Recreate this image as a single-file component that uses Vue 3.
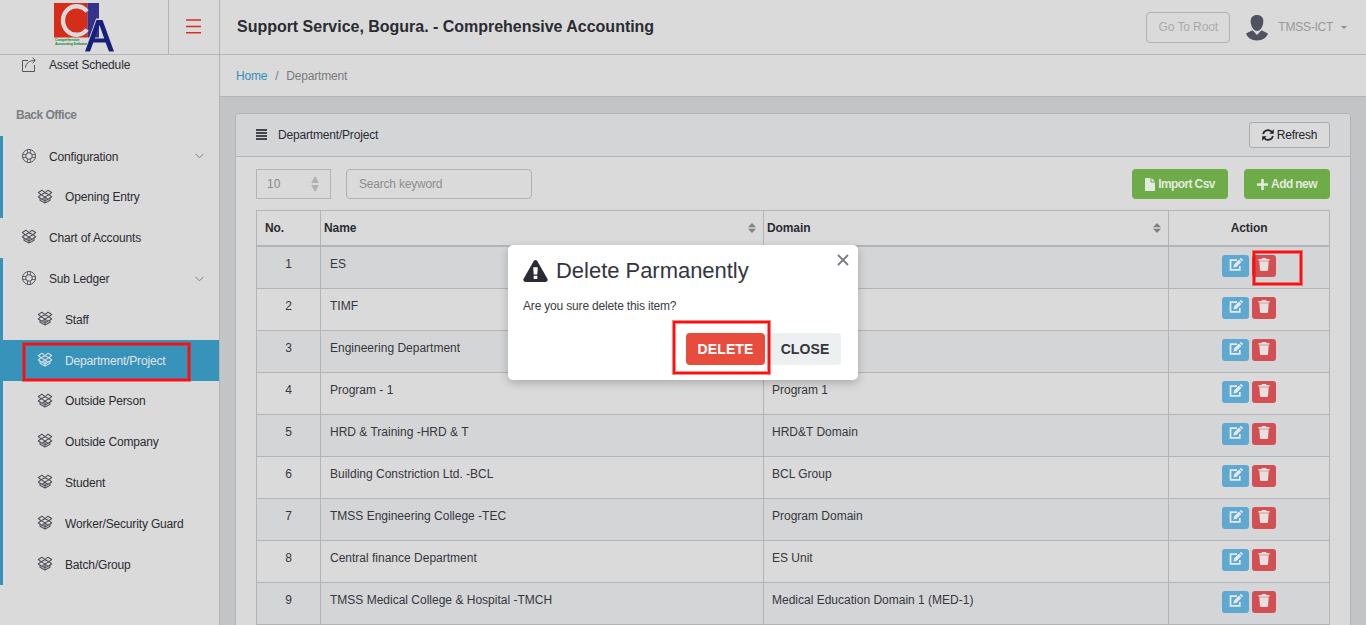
<script setup>
const nav = [
  { label: 'Configuration', icon: 'ring', open: true, bar: true },
  { label: 'Opening Entry', icon: 'box', child: true, bar: true },
  { label: 'Chart of Accounts', icon: 'box' },
  { label: 'Sub Ledger', icon: 'ring', open: true, bar: true },
  { label: 'Staff', icon: 'box', child: true, bar: true },
  { label: 'Department/Project', icon: 'box', child: true, bar: true, active: true },
  { label: 'Outside Person', icon: 'box', child: true, bar: true },
  { label: 'Outside Company', icon: 'box', child: true, bar: true },
  { label: 'Student', icon: 'box', child: true, bar: true },
  { label: 'Worker/Security Guard', icon: 'box', child: true, bar: true },
  { label: 'Batch/Group', icon: 'box', child: true, bar: true },
]
const rows = [
  ['ES', ''],
  ['TIMF', ''],
  ['Engineering Department', ''],
  ['Program - 1', 'Program 1'],
  ['HRD & Training -HRD & T', 'HRD&T Domain'],
  ['Building Constriction Ltd. -BCL', 'BCL Group'],
  ['TMSS Engineering College -TEC', 'Program Domain'],
  ['Central finance Department', 'ES Unit'],
  ['TMSS Medical College & Hospital -TMCH', 'Medical Education Domain 1 (MED-1)'],
]
</script>

<template>
  <div class="page">
    <header class="topbar">
      <div class="brand">
        <svg class="logo" width="62" height="52" viewBox="0 0 62 52">
          <rect x="1" y="1" width="33.500" height="34.500" fill="#d62c1a" />
          <rect x="34.500" y="1" width="11.500" height="34.500" fill="#35328a" />
          <path d="M34 27.500A13.500 14.300 0 1 1 34 9.500" fill="none" stroke="#dadada" stroke-width="4.400" />
          <path d="M33.500 49L44.500 18.500h4L60 49" fill="none" stroke="#dadada" stroke-width="4" />
          <path d="M32 49.500L43.500 18h6L61 49.500H56L52.600 40.500H40.300L37 49.500zM41.800 36.500h9.400L46.500 23z" fill="#17217c" fill-rule="evenodd" />
        </svg>
        <div class="tag"><span>Comprehensive</span><span>Accounting Software</span></div>
      </div>
      <div class="burger">
        <svg width="15" height="15" viewBox="0 0 15 15" stroke="#d92d24" stroke-width="1.500"><path d="M0 1h15M0 7.400h15M0 13.700h15" /></svg>
      </div>
      <h1>Support Service, Bogura. - Comprehensive Accounting</h1>
      <div class="user">
        <button class="root">Go To Root</button>
        <svg width="22" height="26" viewBox="0 0 22 26" fill="#4e535f">
          <path d="M11 0c4 0 6.300 2.300 6.300 6.200C17.300 11 14.500 16 11 16S4.700 11 4.700 6.200C4.700 2.300 7 0 11 0z" />
          <path d="M0 18.500L6.500 15.200 11 20l4.500-4.800L22 18.500C20.500 22.500 17 25.500 11 25.500S1.500 22.500 0 18.500z" />
        </svg>
        <span class="uname">TMSS-ICT</span><i class="caret"></i>
      </div>
    </header>

    <div class="body">
      <aside>
        <div class="first">
          <svg width="16" height="16" viewBox="0 0 16 16" fill="none" stroke="#55575d">
            <path d="M7 3.500H1.500v11h12V8M4.500 10.500C5 6 8 3.500 14 3.500M11.500.8L14.300 3.500 11.500 6.200" />
          </svg>
          <span>Asset Schedule</span>
        </div>
        <div class="section">Back Office</div>
        <div v-for="n in nav" :key="n.label" class="item" :class="{ child: n.child, bar: n.bar, active: n.active }">
          <svg v-if="n.icon === 'ring'" width="16" height="16" viewBox="0 0 16 16" fill="none" stroke="currentColor">
            <circle cx="8" cy="8" r="6.500" /><circle cx="8" cy="8" r="3.300" />
            <path d="M6.500 1.500V5M9.500 1.500V5M6.500 11v3.500M9.500 11v3.500M1.500 6.500H5M1.500 9.500H5M11 6.500h3.500M11 9.500h3.500" stroke-width=".8" />
          </svg>
          <svg v-else width="16" height="16" viewBox="0 0 16 16" fill="none" stroke="currentColor" stroke-width="1.050" stroke-linejoin="round">
            <path d="M8 3.700L5 1.200 1.300 3.500 4 5.700zM8 3.700L11 1.200l3.700 2.300L12 5.700zM4 5.700L1.300 8 5 10.300l3-2.400zM12 5.700L14.700 8 11 10.300 8 7.900zM4 5.700l4 2.200 4-2.200M3 9.300v2l5 2.700 5-2.700v-2M8 8v6M5 10.300l3 1.500 3-1.500" />
          </svg>
          <span>{{ n.label }}</span>
          <svg v-if="n.open" class="chev" width="9" height="6" viewBox="0 0 9 6" fill="none" stroke="#808184"><path d="M.5.800l4 4 4-4" /></svg>
        </div>
      </aside>

      <main>
        <nav class="crumbs"><a>Home</a><span>/</span><b>Department</b></nav>
        <section class="card">
          <div class="chead">
            <div class="bars"><i></i><i></i><i></i><i></i></div>
            <span>Department/Project</span>
            <button class="refresh">
              <svg width="12" height="12" viewBox="0 0 12 12" fill="none" stroke="#25262b" stroke-width="1.700">
                <path d="M1.200 5.200A4.800 4.600 0 0 1 9.800 3M10.800 6.800A4.800 4.600 0 0 1 2.200 9" />
                <path d="M11.800.3v4.500H7.300zM.2 11.700V7.200h4.500z" fill="#25262b" stroke="none" />
              </svg>Refresh
            </button>
          </div>
          <div class="tools">
            <div class="select">10
              <svg width="8" height="16" viewBox="0 0 8 16" fill="#b0b1b2"><path d="M4 0l4 7H0zM0 9h8l-4 7z" /></svg>
            </div>
            <div class="search">Search keyword</div>
            <button class="green csv"><svg width="10" height="13" viewBox="0 0 10 13" fill="#e4e9df"><path d="M0 0h5.500v4.500H10V13H0zM6.500 0L10 3.500H6.500z" /></svg>Import Csv</button>
            <button class="green add"><svg width="11" height="11" viewBox="0 0 11 11" fill="#e4e9df"><path d="M4.200 0h2.600v4.200H11v2.600H6.800V11H4.200V6.800H0V4.200h4.200z" /></svg>Add new</button>
          </div>
          <div class="table">
            <div class="tr th">
              <div class="no">No.</div>
              <div>Name<svg width="8" height="10" viewBox="0 0 8 10" fill="#808184"><path d="M4 0l4 4.300H0zM0 5.700h8L4 10z" /></svg></div>
              <div>Domain<svg width="8" height="10" viewBox="0 0 8 10" fill="#808184"><path d="M4 0l4 4.300H0zM0 5.700h8L4 10z" /></svg></div>
              <div class="act">Action</div>
            </div>
            <div v-for="(r, i) in rows" :key="i" class="tr">
              <div class="no">{{ i + 1 }}</div>
              <div>{{ r[0] }}</div>
              <div>{{ r[1] }}</div>
              <div class="act">
                <button class="edit">
                  <svg width="14" height="13" viewBox="0 0 14 13">
                    <path d="M8 2.200H1.500v9.600h9.300V8" fill="none" stroke="#e4eaee" stroke-width="1.700" />
                    <path d="M4.500 9.500l.5-3L10 1.600l2.400 2.400L7.400 9zM10.700.9l.7-.7q.5-.4 1 0l1.300 1.300q.5.500 0 1l-.7.800z" fill="#e4eaee" />
                  </svg>
                </button>
                <button class="del">
                  <svg width="12" height="13" viewBox="0 0 12 13" fill="#e8dfdf"><path d="M.5 1h3L4.200 0h3.600l.7 1h3v1.700H.5zM1.300 3.300h9.400L10 12q-.1 1-1 1H3q-.9 0-1-1z" /></svg>
                </button>
              </div>
            </div>
          </div>
        </section>
      </main>
    </div>

    <div class="modal">
      <svg class="close" width="12" height="12" viewBox="0 0 12 12" stroke="#7b7d82" stroke-width="1.800"><path d="M1 1l10 10M11 1L1 11" /></svg>
      <div class="title">
        <svg width="25" height="22" viewBox="0 0 25 22"><path d="M10.600 1.200q1.900-2.200 3.800 0l10 17.500q1 3-1.800 3.300H2.400Q-.4 21.700.6 18.700z" fill="#292b36" /><path d="M10.200 7.300h4.600l-.5 7.200h-3.600zM10.700 15.800h3.600V19h-3.600z" fill="#fff" /></svg>
        <span>Delete Parmanently</span>
      </div>
      <p>Are you sure delete this item?</p>
      <div class="btns"><button class="bdel">DELETE</button><button class="bclose">CLOSE</button></div>
    </div>
    <div class="mark m1"></div>
    <div class="mark m2"></div>
    <div class="mark m3"></div>
  </div>
</template>

<style>
body { margin: 0; overflow: hidden; }
</style>

<style scoped>
* { box-sizing: border-box; }
.page { position: relative; width: 1366px; height: 625px; overflow: hidden; background: #c3c4c6; font: 12px/18px "Liberation Sans", Arial, sans-serif; color: #2b2c32; display: flex; flex-direction: column; }
button { font: inherit; border: 0; margin: 0; padding: 0; display: flex; align-items: center; justify-content: center; white-space: nowrap; }
.topbar { height: 55px; flex: none; background: #dadada; border-bottom: 1px solid #b2b4b7; display: flex; align-items: center; }
.brand { width: 169px; height: 54px; border-right: 1px solid #b2b4b7; position: relative; padding: 2px 0 0 53px; }
.logo { display: block; }
.tag { position: absolute; left: 55px; top: 38px; display: flex; flex-direction: column; font-size: 3.600px; line-height: 4px; font-weight: bold; color: #138a3c; white-space: nowrap; letter-spacing: -.2px; }
.burger { width: 51px; height: 54px; border-right: 1px solid #b2b4b7; display: flex; align-items: center; justify-content: center; padding: 0 1px 2px 0; }
h1 { margin: 0 0 0 17px; font-size: 16px; line-height: 20px; font-weight: bold; letter-spacing: -.020px; color: #2b2c32; }
.user { margin-left: auto; display: flex; align-items: center; padding-right: 19px; color: #97989b; }
.root { width: 84px; height: 31px; border: 1px solid #b0b1b3; border-radius: 4px; background: transparent; color: #a9aaab; margin-right: 16px; letter-spacing: -.1px; }
.user svg { margin-top: 2px; }
.uname { margin-left: 10px; letter-spacing: -.25px; }
.caret { margin-left: 8px; border: 3.500px solid transparent; border-top-color: #8d8e90; border-bottom: 0; }
.body { flex: 1; display: flex; min-height: 0; }
aside { width: 220px; background: #dadada; border-right: 1px solid #b2b4b7; flex: none; letter-spacing: -.160px; }
.first { height: 20px; display: flex; align-items: center; padding-left: 21px; gap: 12px; }
.section { margin: 31px 0 12px 16px; height: 18px; font-weight: bold; color: #7b7f84; font-size: 12px; letter-spacing: -.5px; }
.item { height: 40.800px; display: flex; align-items: center; padding-left: 21px; gap: 12px; color: #2b2c32; white-space: nowrap; }
.item > span { margin-top: .3px; }
.item > svg { color: #50525a; margin-top: -1px; }
.bar { border-left: 3px solid #3893bb; padding-left: 18px; }
.child.item { padding-left: 34px; }
.item.active { background: #3893bb; color: #e0e6ea; }
.item.active > svg { color: #d5e0e6; }
.item > .chev { margin: 0 15px 0 auto; }
main { flex: 1; min-width: 0; }
.crumbs { height: 42px; background: #dadada; border-bottom: 1px solid #b2b4b7; display: flex; align-items: center; padding-left: 16px; color: #797b7f; letter-spacing: -.200px; }
.crumbs a { color: #318fba; }
.crumbs span { margin: 0 8px; }
.crumbs b { font-weight: normal; }
.card { margin: 16px 0 0 15px; width: 1116px; height: 600px; background: #dadada; border: 1px solid #b2b4b7; border-radius: 4px 4px 0 0; }
.chead { height: 43px; background: #d4d5d7; border-bottom: 1px solid #b2b4b7; display: flex; align-items: center; padding: 0 20px; border-radius: 3px 3px 0 0; letter-spacing: -.180px; }
.bars { display: flex; flex-direction: column; gap: 1px; width: 11px; margin: -1px 11px 0 0; }
.bars i { height: 2px; background: #43454c; }
.refresh { letter-spacing: -.2px; margin-left: auto; width: 81px; height: 26px; border: 1px solid #a9abae; border-radius: 3px; background: #dadada; gap: 3px; color: #222329; }
.tools { display: flex; padding: 12px 20px 11px; }
.select { width: 75px; height: 30px; border: 1px solid #b2b4b7; display: flex; align-items: center; justify-content: space-between; padding: 0 11px 0 10px; color: #88898b; }
.search { width: 186px; height: 30px; margin-left: 15px; border: 1px solid #aeb0b3; border-radius: 4px; padding: 5px 12px; color: #8d8e90; letter-spacing: -.2px; }
.green { height: 30px; border-radius: 4px; background: #6eab49; color: #e4e9df; font-weight: bold; gap: 3px; letter-spacing: -.600px; }
.csv { width: 96px; margin-left: auto; }
.add { width: 86px; margin-left: 16px; }
.table { width: 1074px; margin-left: 20px; border: 1px solid #b2b4b7; }
.tr { display: grid; grid-template-columns: 64px 443px 405px 160px; height: 42px; border-bottom: 1px solid #b2b4b7; }
.tr > div { border-right: 1px solid #b2b4b7; padding: 8px 9px 0; color: #36373c; }
.tr > div:last-child { border-right: 0; }
.tr:nth-child(even) { background: #d4d5d7; }
.tr > div:nth-child(3) { padding-left: 8px; }
.tr > .no { text-align: center; }
.th { height: 36px; border-bottom-width: 2px; font-weight: bold; }
.th > div, .th > div:nth-child(3) { display: flex; justify-content: space-between; padding: 8px 7px 0 3px; color: #2b2c32; letter-spacing: -.1px; }
.th > .no { padding-left: 8px; }
.th svg { margin-top: 4px; }
.th > .act { justify-content: center; padding: 8px 0 0; }
.tr:not(.th) > .act { display: flex; justify-content: center; gap: 3px; padding: 8px 0 0 0; }
.edit { width: 27px; height: 22px; border-radius: 3px; background: #5fa8cf; }
.del { width: 24px; height: 22px; border-radius: 3px; background: #d25053; }
.edit svg, .del svg { margin-top: -3px; }
.modal { position: absolute; left: 508px; top: 245px; width: 350px; height: 135px; border-radius: 5px; background: #fff; box-shadow: 0 3px 10px rgba(0,0,0,.22); padding: 12px 17px 0 15px; }
.close { position: absolute; left: 329px; top: 9px; }
.title { display: flex; align-items: center; height: 27px; gap: 8px; font-size: 22px; line-height: 27px; letter-spacing: -.030px; color: #33353f; white-space: nowrap; }
.modal p { margin: 13px 0 18px; line-height: 18px; color: #3a3b42; letter-spacing: -.180px; }
.btns { display: flex; justify-content: flex-end; gap: 4px; }
.btns button { height: 32px; font-size: 14px; font-weight: bold; border-radius: 4px; letter-spacing: .1px; }
.bdel { width: 79px; background: #e84c3d; color: #fff; }
.bclose { width: 72px; background: #ecf0f1; color: #33363b; }
.mark { position: absolute; border: 2px solid #fb1010; box-shadow: 0 0 0 1px rgba(251,16,16,.5), inset 0 0 0 1px rgba(251,16,16,.5); }
.m1 { left: 23px; top: 343px; width: 167px; height: 38px; }
.m2 { left: 673px; top: 321px; width: 97px; height: 53px; }
.m3 { left: 1253px; top: 251px; width: 49px; height: 34px; }
</style>
